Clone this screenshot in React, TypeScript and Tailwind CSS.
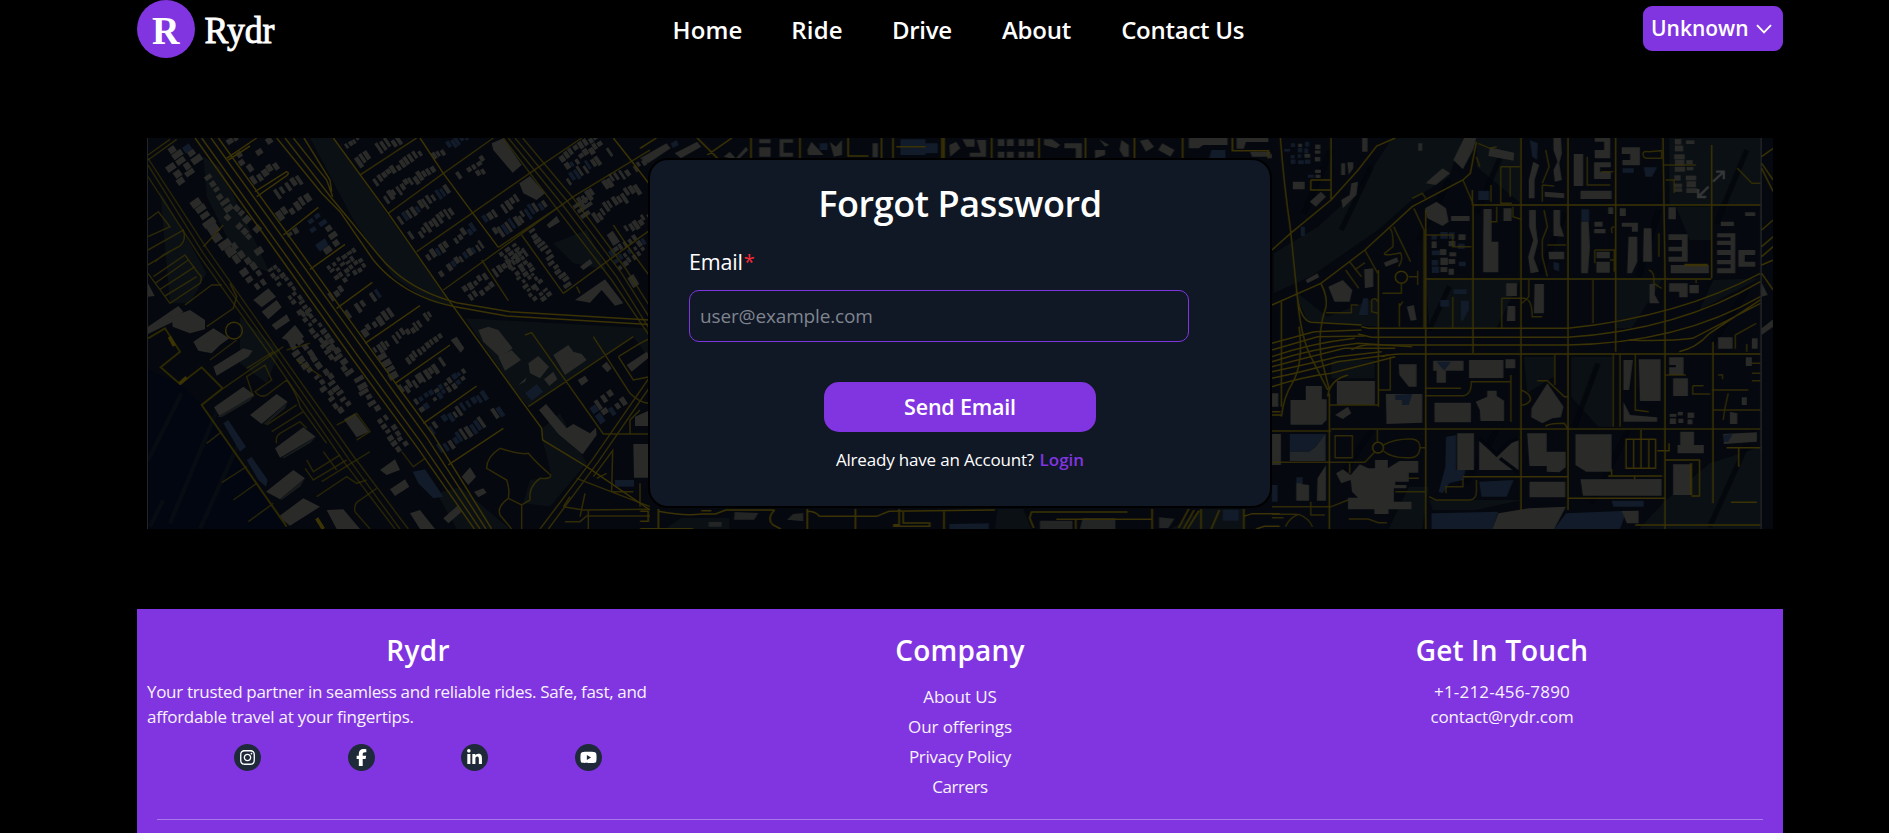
import { FaFacebookF, FaInstagram, FaLinkedinIn, FaYoutube } from 'react-icons/fa6';

const STONE = '#2a2b29';
const SLATE = '#121b29';
const DARK = '#03060c';
const OPEN = '#0a1013';
const ROAD = '#3b3305';

function seeded(seed: number) {
  let s = seed;
  return () => {
    s = (s * 16807) % 2147483647;
    return s / 2147483647;
  };
}

type BlockProps = {
  x: number;
  y: number;
  w: number;
  h: number;
  angle?: number;
  rows?: number;
  size?: number;
  blue?: number;
};

/* A city block: rows of small houses, centred on (x, y) and turned by angle. */
function Block({ x, y, w, h, angle = -34, rows = 2, size = 17, blue = 0 }: BlockProps) {
  const rnd = seeded(Math.round(x * 31 + y * 17 + w));
  const cells = [];
  const cols = Math.max(1, Math.round(w / size));
  for (let r = 0; r < rows; r++) {
    for (let c = 0; c < cols; c++) {
      if (rnd() < 0.08) continue;
      const bw = size * (0.55 + rnd() * 0.4);
      const bh = (h / rows) * (0.45 + rnd() * 0.4);
      const bx = -w / 2 + c * size + rnd() * 3;
      const by = -h / 2 + (r * h) / rows + rnd() * (h / rows - bh);
      cells.push(
        <rect
          key={`${r}-${c}`}
          x={bx.toFixed(1)}
          y={by.toFixed(1)}
          width={bw.toFixed(1)}
          height={bh.toFixed(1)}
          fill={rnd() < blue ? SLATE : STONE}
        />,
      );
    }
  }
  return <g transform={`translate(${x} ${y}) rotate(${angle})`}>{cells}</g>;
}

const westBlocks: BlockProps[] = [
  { x: 145, y: 85, w: 120, h: 80, angle: 55, rows: 2, size: 22, blue: 0.1 },
  { x: 98, y: 130, w: 110, h: 46, angle: 55, rows: 1, size: 26 },
  { x: 182, y: 238, w: 120, h: 50, angle: 55, rows: 1, size: 24 },
  { x: 235, y: 190, w: 130, h: 36, angle: 55, rows: 1, size: 22 },
  { x: 305, y: 275, w: 100, h: 60, angle: 45, rows: 2, size: 22 },
  { x: 245, y: 335, w: 120, h: 46, angle: 55, rows: 1, size: 30 },
  { x: 300, y: 385, w: 100, h: 60, angle: 55, rows: 2, size: 30 },
  { x: 345, y: 445, w: 90, h: 60, angle: 55, rows: 2, size: 28 },
  { x: 360, y: 360, w: 40, h: 42, rows: 1, size: 40 },
  { x: 450, y: 485, w: 190, h: 44, angle: 55, rows: 2, size: 17 },
  { x: 540, y: 610, w: 170, h: 48, angle: 55, rows: 2, size: 19 },
  { x: 595, y: 680, w: 130, h: 36, angle: 55, rows: 1, size: 19 },
  { x: 680, y: 795, w: 120, h: 38, angle: 60, rows: 1, size: 20 },
  { x: 495, y: 680, w: 110, h: 60, angle: 55, rows: 2, size: 22 },
  { x: 575, y: 780, w: 130, h: 60, angle: 55, rows: 2, size: 20 },
  { x: 755, y: 905, w: 110, h: 48, angle: 55, rows: 2, size: 20 },
  { x: 265, y: 38, w: 60, h: 24, rows: 1, size: 24 },
  { x: 370, y: 52, w: 60, h: 34, rows: 1, size: 22 },
  { x: 312, y: 100, w: 80, h: 30, angle: 55, rows: 1, size: 25 },
  { x: 378, y: 128, w: 105, h: 36, rows: 1, size: 20 },
  { x: 445, y: 172, w: 90, h: 40, rows: 1, size: 19, blue: 0.3 },
  { x: 462, y: 230, w: 120, h: 38, rows: 1, size: 20 },
  { x: 460, y: 308, w: 46, h: 24, rows: 1, size: 22 },
  { x: 548, y: 305, w: 110, h: 66, angle: 55, rows: 2, size: 24, blue: 0.4 },
  { x: 622, y: 408, w: 110, h: 76, rows: 4, size: 18 },
  { x: 590, y: 487, w: 56, h: 34, rows: 1, size: 18 },
  { x: 672, y: 520, w: 130, h: 42, rows: 1, size: 18, blue: 0.3 },
  { x: 712, y: 575, w: 120, h: 40, rows: 1, size: 20 },
  { x: 790, y: 610, w: 210, h: 36, rows: 1, size: 14 },
  { x: 855, y: 655, w: 140, h: 30, rows: 1, size: 15 },
  { x: 742, y: 705, w: 80, h: 34, angle: 60, rows: 1, size: 22 },
  { x: 850, y: 738, w: 170, h: 40, rows: 1, size: 15 },
  { x: 905, y: 780, w: 180, h: 48, rows: 2, size: 17, blue: 0.5 },
  { x: 955, y: 845, w: 210, h: 40, rows: 1, size: 17, blue: 0.75 },
  { x: 990, y: 900, w: 220, h: 46, rows: 1, size: 16, blue: 0.6 },
  { x: 640, y: 36, w: 60, h: 20, rows: 1, size: 14 },
  { x: 715, y: 62, w: 150, h: 48, rows: 1, size: 15, blue: 0.1 },
  { x: 770, y: 110, w: 170, h: 34, rows: 1, size: 16 },
  { x: 808, y: 160, w: 180, h: 38, rows: 1, size: 15 },
  { x: 850, y: 225, w: 175, h: 42, rows: 1, size: 15, blue: 0.35 },
  { x: 885, y: 275, w: 180, h: 42, rows: 1, size: 14 },
  { x: 930, y: 338, w: 170, h: 36, rows: 1, size: 16, blue: 0.5 },
  { x: 970, y: 380, w: 180, h: 34, rows: 1, size: 15, blue: 0.6 },
  { x: 930, y: 45, w: 130, h: 36, rows: 1, size: 14, blue: 0.4 },
  { x: 1000, y: 125, w: 100, h: 56, rows: 2, size: 17, blue: 0.3 },
  { x: 1090, y: 235, w: 140, h: 40, rows: 1, size: 16, blue: 0.7 },
  { x: 1140, y: 265, w: 180, h: 44, rows: 1, size: 14, blue: 0.4 },
  { x: 1015, y: 470, w: 90, h: 60, rows: 2, size: 18 },
  { x: 1110, y: 395, w: 120, h: 36, rows: 1, size: 15 },
  { x: 1155, y: 430, w: 190, h: 66, angle: 55, rows: 3, size: 15 },
  { x: 1230, y: 385, w: 210, h: 34, angle: 55, rows: 1, size: 16 },
  { x: 1320, y: 65, w: 130, h: 60, rows: 2, size: 17, blue: 0.1 },
  { x: 1350, y: 105, w: 170, h: 40, rows: 1, size: 15, blue: 0.4 },
  { x: 1390, y: 170, w: 180, h: 44, rows: 1, size: 15 },
  { x: 1425, y: 220, w: 160, h: 46, rows: 1, size: 15 },
  { x: 1335, y: 230, w: 60, h: 54, rows: 3, size: 56 },
  { x: 1495, y: 280, w: 90, h: 36, rows: 1, size: 15 },
  { x: 1470, y: 360, w: 120, h: 70, rows: 3, size: 17, blue: 0.3 },
  { x: 1505, y: 100, w: 60, h: 30, rows: 1, size: 15 },
  { x: 1410, y: 820, w: 120, h: 76, rows: 2, size: 22, blue: 0.3 },
];

function WestMap() {
  return (
    <g transform="translate(-7 -8) scale(0.33333)">
      <g fill={OPEN}>
        <path d="M510 24H580L940 530L870 515L760 440L640 270Z" />
        <path d="M975 565L1530 595V690L1480 620L1165 830L1130 790Z" />
        <path d="M190 80L240 110L330 300L390 430L290 380L200 200Z" />
        <path d="M1240 340L1340 300L1400 420L1300 400Z" />
        <path d="M1200 900L1260 850L1340 1000L1230 1130L1150 1120L1170 1050L1235 1040Z" />
        <path d="M890 1090L960 1070L1110 1197H950Z" />
        <path d="M60 180L200 430L150 520L90 520Z" />
        <path d="M300 560L420 660L380 760L300 700Z" />
      </g>
      <path d="M24 720L120 762L185 825L440 1197H24Z" fill="#020611" />
      <g stroke="#070c12" strokeWidth="13">
        <path d="M125 790L24 990M240 820L90 1180M300 930L180 1197M70 1110L30 1190" />
      </g>
      {westBlocks.map((b) => (
        <Block key={`${b.x}-${b.y}`} {...b} />
      ))}
      <g fill={STONE}>
        <path d="M24 590L115 528L130 545L100 575L24 612Z" />
        <path d="M95 560L150 540L195 570V598L150 610L98 590Z" />
        <path d="M160 635L220 595L268 625L240 645L215 670L175 662Z" />
        <path d="M220 710L310 655L338 662L325 680L230 737Z" />
        <path d="M222 832L310 770L343 795L240 860Z" />
        <path d="M330 855L410 792L443 815L365 882Z" />
        <path d="M405 955L490 892L527 920L420 983Z" />
        <path d="M378 1085L460 1020L495 1045L420 1108Z" />
        <path d="M415 1160L490 1105L540 1130L450 1187Z" />
        <path d="M24 460L44 498L24 500Z" />
        <path d="M340 510L385 475L408 500L365 532Z" />
        <path d="M365 545L410 510L425 532L385 568Z" />
        <path d="M395 585L440 553L450 572L408 600Z" />
        <path d="M425 625L465 585L492 620L455 655L440 630Z" />
        <path d="M612 868L645 850L687 905L650 922Z" />
        <path d="M720 1020L765 988L780 1020L740 1035Z" />
        <path d="M750 1078L795 1048L808 1070L765 1098Z" />
        <path d="M560 1140L610 1138L660 1197H590Z" />
        <path d="M810 1150L840 1140L885 1197H840Z" />
        <path d="M910 1165L955 1125L965 1145L925 1180Z" />
        <path d="M965 1040L990 1012L1008 1040L985 1065Z" />
        <path d="M1002 1085L1030 1075L1040 1088L1015 1102Z" />
        <path d="M1055 40L1090 25L1145 105L1118 128L1060 60Z" />
        <path d="M1138 160L1170 138L1215 190L1190 210L1150 190Z" />
        <path d="M1305 510L1395 448L1450 520L1425 527L1385 480L1350 518Z" />
        <path d="M1220 285L1250 258L1260 275L1228 295Z" />
        <path d="M1320 410L1350 387L1358 400L1330 420Z" />
        <path d="M1400 315L1418 302L1440 335L1420 348Z" />
        <path d="M1462 445L1480 432L1498 462L1480 475Z" />
        <path d="M1015 600L1045 590L1075 600L1118 655L1080 682L1030 635Z" />
        <path d="M1075 680L1115 660L1143 690L1095 722Z" />
        <path d="M1165 700L1195 678L1227 710L1200 745L1170 730Z" />
        <path d="M1240 675L1285 645L1300 665L1325 672L1340 690L1275 735Z" />
        <path d="M1212 748L1240 725L1252 748L1228 768Z" />
        <path d="M1197 840L1218 822L1280 895L1300 882L1350 910L1368 893L1370 915L1328 973L1255 912Z" />
        <path d="M1385 708L1400 695L1415 715L1402 727Z" />
        <path d="M1313 750L1335 737L1345 752L1325 767Z" />
        <path d="M1460 705L1520 665L1530 680L1475 725Z" />
        <path d="M1485 860L1530 840V888H1485Z" />
        <path d="M1480 942H1530V1043H1482Z" />
        <path d="M932 630L950 620L973 655L962 668Z" />
        <path d="M1135 765L1160 742L1155 755Z" />
      </g>
      <g fill={SLATE}>
        <path d="M250 880L265 870L318 950L300 965Z" />
        <path d="M320 990L335 980L383 1050L378 1070L355 1050Z" />
        <path d="M818 1025L855 1018L910 1100L880 1105L835 1060Z" />
        <path d="M1155 790L1190 762L1210 785L1175 812Z" />
        <path d="M1425 1050H1482V1070H1425Z" />
        <path d="M1525 375H1530V400H1525Z" />
        <path d="M525 345L555 325L565 345L540 365Z" />
      </g>
      <g fill="#181b1c">
        <path d="M232 860L343 795L330 812L245 862Z" />
        <path d="M370 882L443 815L435 835L378 884Z" />
        <path d="M425 983L527 920L512 938L432 985Z" />
        <path d="M420 1108L495 1045L480 1070L425 1110Z" />
      </g>
      <g fill="none" stroke={ROAD} strokeWidth="4.5">
        <path d="M165 24L640 690L830 950L1003 1197M185 24L655 680L845 940L1020 1197M213 24L675 665L862 925L1038 1197M235 24L690 655L880 915L1055 1197" />
        <path d="M24 85L200 355L400 640L640 978L805 1197M24 105L190 370L390 650L625 985L780 1197M24 140L180 380L380 660L615 1000L765 1197" opacity=".65" />
        <path d="M410 24L545 190L600 245L700 390Q790 500 945 530L1100 558L1530 584" />
        <path d="M435 24L575 205L625 265L715 375Q800 480 950 518L1110 545L1530 570" />
        <path d="M460 24L560 150L578 200M492 24L570 150L575 185" />
        <path d="M580 24L745 250L940 530L1150 820L1205 895L1208 930L1340 1010L1530 1140" />
        <path d="M840 24L910 130L995 245L1075 352" />
        <path d="M1105 24L1268 225L1430 440L1530 600M1125 24L1283 215L1445 430L1530 565M1148 24L1300 205L1460 420L1530 530M1090 24L1250 235L1415 450L1530 620" opacity=".75" />
        <path d="M1420 24L1480 100L1530 165" />
        <path d="M660 135L830 24M745 250L910 130L1060 24M830 365L1190 115L1325 24M910 480L1300 200L1530 60M1075 352L1250 235M1270 490L1530 300M1025 390L1105 512M1145 315L1270 490M1310 470L1320 490M1420 285L1460 345L1530 440" opacity=".8" />
        <path d="M260 85L350 24M345 185L440 125Q450 128 440 137L350 200M430 315L535 232M510 418L615 343M590 535L697 457M675 640L840 527M765 760L930 645M850 880L1010 768M925 1005L1090 895M265 90L330 48" />
        <path d="M24 75L90 28M24 90L110 28M24 320L90 290L55 245L24 268M24 360L130 300Q140 330 120 348L70 375L45 395M24 405L90 365M24 430L90 520L180 460Q190 440 175 430L135 375L40 440M45 460L145 390M60 478L165 410M75 498L170 440M135 525L215 465L245 465M200 590L280 535L290 500L270 460M190 350L250 285" opacity=".75" />
        <circle cx="282" cy="602" r="25" />
        <path d="M210 690L290 630M320 715L400 665M340 800L320 740L375 705L395 750L345 785Q360 805 380 795L440 750M380 885L470 825M395 905L490 845M410 940Q405 920 420 910L480 875L500 895M250 775L430 650M500 990L520 1025L600 975M495 1015L520 1050L620 990M545 1055L690 965M550 965L590 1020M245 1058L320 1010M200 940L245 905M325 1175L400 1120M530 1100L620 1040L650 1060L680 1050M645 1145Q640 1120 660 1110L710 1075M645 1145L690 1197M590 885L620 870L650 850L690 905L650 930M785 965L820 1010L855 985M280 1110L350 1060M440 660L510 640M470 690L545 740M440 750Q470 790 480 830L560 940" opacity=".65" />
        <path d="M24 625L75 595L120 665L62 712L120 762L185 712L248 775L185 825L440 1190" strokeWidth="6" stroke="#2c2803" />
        <path d="M88 620L103 648M118 762L140 742M530 1165L550 1197" strokeWidth="11" stroke="#3c3403" />
        <path d="M1080 955Q1040 980 1040 1015L1100 1050Q1110 1080 1105 1105Q1070 1130 1080 1155L1115 1197M1080 955Q1140 975 1165 970Q1190 1000 1232 1035Q1235 1048 1200 1045Q1165 1070 1170 1110L1145 1125L1105 1105M1145 1125V1197" opacity=".8" />
        <path d="M1155 615L1175 608L1390 912H1530M1165 830L1480 620M1360 620L1470 790Q1500 820 1530 820M1435 680L1500 640L1530 625M1435 680L1480 750L1530 740M1200 1197L1360 985L1530 740M1225 1197L1375 995L1530 770M1470 912V870L1500 840M1360 1040L1418 962L1415 1085M1370 1045L1400 1030M1310 1045L1530 1130M1270 1130L1330 1140L1530 1138M1275 1175H1320L1340 1158H1530M1345 1197V1140M1320 1160L1335 1090M1270 1130L1290 1100M1415 1085H1480M1500 1060V1130" opacity=".85" />
      </g>
      <path d="M22 24V1197" stroke="#2a2c2e" strokeWidth="3" />
    </g>
  );
}

const eastBlocks: BlockProps[] = [
  { x: 110, y: 70, w: 80, h: 70, angle: 0, rows: 4, size: 20, blue: 0.9 },
  { x: 175, y: 60, w: 28, h: 70, angle: 0, rows: 4, size: 28 },
  { x: 165, y: 130, w: 50, h: 30, angle: 0, rows: 2, size: 22, blue: 0.4 },
  { x: 545, y: 370, w: 80, h: 130, angle: 0, rows: 5, size: 26, blue: 0.5 },
  { x: 600, y: 365, w: 30, h: 110, angle: 0, rows: 4, size: 25, blue: 0.8 },
  { x: 1260, y: 110, w: 70, h: 170, angle: 0, rows: 8, size: 34 },
  { x: 1008, y: 295, w: 40, h: 40, angle: 0, rows: 2, size: 38 },
  { x: 1255, y: 865, w: 90, h: 40, angle: 0, rows: 2, size: 26 },
];

const eastBuildings = [
  'M603 24H640L630 60L600 118L572 90Z', 'M500 150L540 115L562 130L520 165L490 160Z', 'M680 52L752 68L750 92L675 78Z',
  'M147 215L180 185L195 200L165 230Z', 'M97 155H132V178H97Z', 'M240 100H252V135H240ZM258 97H276V115L262 135Z',
  'M270 160L290 155L285 195L245 235L240 210L265 195Z', 'M302 24H318V65H302ZM468 40H480V62H468Z',
  'M488 235L522 215L550 235L558 275L540 288L495 265Z', 'M565 258H620V273H565Z', 'M661 237H685V335H705V427H660V335Z',
  'M720 235H744V273H720Z', 'M928 72H956V168H928Z', 'M990 24H1036V85H990V60H1018V35H990Z', 'M988 97H1038V112H1006V125H1038V147H988Z',
  'M1070 52H1124V106H1072V90H1095V72H1070Z', 'M948 182H1040V207H948Z', 'M842 185L900 190V205L842 200Z',
  'M868 24H890L893 70L885 100L893 150L872 155L868 120L880 95L868 60Z', 'M808 95L826 105L812 150V205H795V150Z',
  'M868 240H888V285L900 320L868 318Z', 'M796 240H816V290L822 335L810 385L825 425L800 430L793 380L808 330L796 290Z',
  'M853 365H900V388H855Z', 'M950 275H972L976 350L970 430H950V350Z', 'M1070 278H1118V305H1100V290H1070Z',
  'M1090 320H1116V395L1100 430H1086Z', 'M1135 295H1158L1160 395H1133Z', 'M1208 232H1230V268H1208Z',
  'M1208 313H1265V395H1208V380H1248V364H1208V350H1248V330H1208Z', 'M1215 405H1328V430H1215Z',
  'M1352 310H1406V430H1352V415H1392V403H1352V390H1392V375H1352V360H1392V345H1352V332H1392V322H1352Z',
  'M1415 360H1465V375H1434V395H1465V410H1415Z', 'M1363 275H1402V288H1363ZM1435 247H1465V258H1435Z',
  'M995 365H1035V385H995ZM995 395H1035V428H995Z', 'M1030 232H1045V252H1030ZM1064 235H1082V258H1064Z',
  'M202 470L245 450L273 480L265 515L220 515Z', 'M308 418L335 415V470L310 475Z', 'M135 450L170 430L175 442L140 460Z',
  'M366 398L405 382L410 395L372 410Z', 'M728 460H760V498H728ZM732 528H755V573H730Z', 'M812 462H840V550H810Z',
  'M1210 460H1265V502H1240V485H1210ZM1270 465H1298V490H1270Z', 'M1152 462H1168V495L1182 520H1152Z',
  'M1355 622H1398V656H1355ZM1455 625H1472V656H1455Z', 'M434 530L455 525L463 570L445 572Z',
  'M410 703H463V770H440L412 735Z', 'M512 692H602V722H550V758H522V722H512Z', 'M618 690H720V744H618Z',
  'M726 688H755V715H726Z', 'M227 753H340V824H227Z', 'M90 810H135V768H183V808H197V870L183 884H90Z',
  'M372 792H480V878L374 882Z', 'M516 818H624V877H516Z', 'M638 815L672 800V782H700V798L722 812V873H652L650 840Z',
  'M803 835L850 760L898 830L890 862L865 865L835 880L802 862Z', 'M1120 688H1185V813H1124Z', 'M1075 690H1103L1092 780H1075Z',
  'M1075 815L1095 855L1175 862V875H1075Z', 'M1210 682H1253V735H1210V712H1230V705H1210Z', 'M1222 745H1266V798H1222Z',
  'M1437 682H1455V708H1437ZM1425 802H1440V825H1425Z', 'M1390 845L1412 850V882H1390Z',
  'M583 910H633V1020H583Z', 'M648 932L700 978L765 920V1020H648Z', 'M790 910H848V965H904V1012L885 1027L848 1025V1008H797Z',
  'M933 913H1040V1025H965L933 1005Z', 'M1243 905H1284V945H1313V970H1235V945H1243Z', 'M1370 912L1470 907V935L1372 942Z',
  'M1222 1003H1276V1095H1222Z', 'M797 1055H903V1102H797Z', 'M948 1048L1188 1047V1097H955Z',
  'M225 1030L245 1018L268 1035L295 1003L320 1015H340V990H378V1015L412 993H468V1028H440V1055H400V1065H433V1075H396V1115H448V1138H380V1152H338V1138H260V1103H290L272 1085L268 1050L240 1060Z',
  'M107 1060L125 1040V1063L145 1065V1112H107Z', 'M170 1045L195 1005V1112H168Z', 'M35 912H62V1005H35ZM35 790H54V830H35Z',
  'M705 1150L795 1135L905 1130L870 1197H687Z', 'M1070 1143L1120 1142V1180H1085Z', 'M222 855L260 830L270 850L245 867Z',
  'M1485 460L1502 495L1484 500Z', 'M1484 595L1518 568V590L1484 615Z', 'M35 70V85H20Z',
];

function EastMap() {
  return (
    <g transform="translate(1113 -8) scale(0.338 0.33333)">
      <g fill={OPEN}>
        <path d="M390 24H600L560 140L450 210L350 300L150 440L40 490V370L170 290L290 180Z" />
        <path d="M640 24H770V220L640 110ZM1210 24H1480V225H1210Z" />
        <path d="M490 450H770L700 595H500ZM1052 450H1190L1100 595H1052Z" />
        <path d="M920 680H1045V890H1000L920 800ZM210 690H340V745H210ZM100 480L200 560L350 500V590L140 575Z" />
        <path d="M1200 1110L1330 1000L1480 950V1197H1120ZM780 680H870V740L790 790Z" />
        <path d="M1230 230H1335V330H1270ZM1340 450L1480 445L1300 540ZM440 1070H500L480 1197H380Z" />
        <path d="M500 1110H780L640 1140H510Z" />
      </g>
      <g stroke={DARK} strokeWidth="15" opacity=".75">
        <path d="M210 60L130 250M330 110L240 300M560 150L470 330M720 60L640 250M900 250L830 430M1180 240L1120 440M1440 60L1350 280M560 470L500 600M700 900L610 1060M1090 900L980 1120M1440 480L1340 640M1000 700L930 890M330 900L240 1040M1460 900L1330 1190" />
      </g>
      {eastBlocks.map((b) => (
        <Block key={`${b.x}-${b.y}`} {...b} />
      ))}
      <g fill={SLATE}>
        <path d="M798 30L822 40L820 90L805 80ZM645 182H678V210H645ZM950 238H974V275H950ZM120 290H133V318H120Z" />
        <path d="M550 920L580 915V1020H608L600 1050L560 1060L540 1090L528 1085L548 1010Z" />
        <path d="M648 1055L750 1050L730 1100H655ZM507 1150L705 1145L687 1197H507ZM905 1150L1085 1142L1065 1197H870Z" />
        <path d="M1040 1112H1135V1130H1045ZM35 1065H52V1115H35ZM533 510H560V530H533ZM1072 115H1106V128H1072ZM1135 112H1175L1160 140H1140Z" />
        <path d="M868 395L885 400V425L868 418ZM572 478H612V492H572Z" />
      </g>
      <path d={eastBuildings.join('')} fill={STONE} />
      <g fill={SLATE}>
        <path d="M88 912H192L165 950L145 965H88ZM400 795L450 792L440 825H420V810H400ZM522 695H565L545 722ZM292 555L305 505H320V555ZM594 512L618 512V540L600 572H594Z" />
        <path d="M107 1042H125V1060H107ZM1372 915L1398 912L1385 935H1372Z" />
      </g>
      <path d="M88 965H145L165 950L192 912H194V993H88Z" fill="#25282a" />
      <path d="M648 925L700 975L740 935L765 925M710 985L765 1027" stroke={DARK} strokeWidth="10" fill="none" />
      <g fill="none" stroke={ROAD} strokeWidth="4.5">
        <path d="M35 525L180 460L310 360L450 230L600 150L622 130L640 35M60 24Q70 160 90 300L110 500Q120 570 150 577L300 585M110 500Q120 620 150 680L200 780M35 360L90 310L210 210L290 120L345 48L400 24M210 24V210M150 150H208M150 150V180H208" />
        <path d="M772 24V1140M911 24V1140M1052 24V665M1192 24L1198 440V1197M1336 45V445M1340 635V1120M630 225V670M490 240V1197M350 420V830M205 790V1197M63 515V830M628 180V225" />
        <path d="M630 225H1480M490 447H1335" />
        <path d="M300 590L320 595H910Q1240 560 1480 430M290 612L330 622H910Q1240 600 1480 455M270 660Q300 640 350 645H910Q1240 640 1480 500M360 680Q390 670 430 672H1480M1090 630Q1200 635 1280 625L1480 520M1240 665Q1290 655 1330 610L1480 510" />
        <path d="M35 640L160 605L300 600M35 660L170 620L310 618M35 680Q150 640 280 625M35 695Q160 655 290 640L450 650M35 710Q150 680 250 655L400 655M35 725Q150 700 230 680L360 665M35 745Q150 720 230 695L380 675M35 770Q130 740 210 730L400 680M200 800Q205 750 260 735" />
        <path d="M115 590Q130 700 95 760Q70 800 63 860M180 460Q200 500 195 530Q170 600 180 680L205 780M35 855H63M35 845H60" />
        <path d="M210 897H1480M35 903H210M205 825H350M490 775H595M490 797H600Q625 795 625 755H742M742 735V875M772 780Q800 790 800 810Q790 825 775 825M872 675V765M820 752H850L900 800H911M845 890Q850 880 900 880L911 897M1065 670V890M1110 670V840L1150 845M385 680V780H350M1045 670V890" opacity=".85" />
        <path d="M1280 767H1312M1280 767V792H1332M1355 735H1368V748M1336 780H1445M1340 840H1480M1385 790Q1375 830 1370 870M1200 735H1260M1455 700H1480M1455 730H1480M1455 752H1480M1406 656V615L1468 580M1440 642V665" opacity=".8" />
        <path d="M1083 928H1170V1015H1083ZM1105 928V1015M1127 900V1015M1150 928V1015M1175 962H1210V940M1200 990H1300V1098H1276M1380 953H1480M1416 953V1010M1393 1117H1470M1030 1038H1190M1040 1018V1035M911 1105H1200M1110 1185H1480M600 1040H911M1108 1038V1048" />
        <circle cx="349" cy="953" r="16" />
        <path d="M365 945Q400 925 450 927Q475 930 473 955Q470 985 440 983Q390 985 365 963M474 953H490M222 917H273V983H222ZM347 900V935M340 965L310 997H205M205 997H35M265 1000V1030M35 1153H110M35 1163H70M35 1130H205M150 1115V1155H192M75 1190Q90 1160 115 1153Q145 1165 155 1190M262 1167H320L350 1178H375M205 1132L260 1110M400 1085H490M440 1045H470M640 1050V1085Q640 1108 620 1110H520L500 1100M550 1090V1070H600V1045" opacity=".8" />
        <circle cx="418" cy="442" r="18" />
        <path d="M440 440H466M466 422V465M418 462V490H362M385 295Q395 310 393 350L368 370Q365 380 415 368Q425 385 410 410M455 235L485 300V595M310 360L348 430M253 420L292 475M265 395L300 440M280 420L310 398M395 290L445 395M330 510Q340 500 348 515M330 510V545L348 550M412 520V590M412 530L422 515M195 548H270V525H290M450 205L480 190L490 205M600 150L630 220" opacity=".8" />
        <path d="M645 40L680 55L700 50M640 80L650 110M712 110V220H745M712 110H770M740 110V200M683 165V215M700 230V275H680M748 230V260L772 268M835 165V215M835 165L870 168M845 60L855 110L835 160M840 240L850 290L835 330V380L850 440M850 345H905M968 80V165H1036M1010 125H1045M985 450V580M990 360H1048V425M990 360V400M1035 390H1048M1048 290Q1035 290 1042 310M1150 420Q1168 425 1165 460L1188 475M1133 72Q1133 62 1150 65L1188 62V85H1145Q1133 85 1133 72M1195 105H1290M1200 150H1225V190M1412 115L1455 160H1480M1290 450V460M1180 310V380M715 505V595M715 505H775Q805 500 805 560H835M795 450V500L775 520M570 500V595M490 315H570V350H625" opacity=".8" />
        <path d="M1255 405H1325M1275 1000V1095" strokeWidth="7" />
        <path d="M1484 80L1518 55M1484 100L1518 150M1484 115L1518 185M1484 300L1518 270M1484 350L1518 320M1484 380L1518 350M1484 405L1518 390M1484 430L1518 480" />
      </g>
      <path d="M1482 24V1197" stroke="#353738" strokeWidth="3" />
      <g fill="none" stroke="#353637" strokeWidth="7">
        <path d="M1340 155L1371 126M1349 125H1372V148" />
        <path d="M1327 170L1297 200M1296 177V201H1320" />
      </g>
    </g>
  );
}

function CentreMap() {
  return (
    <>
      <g transform="translate(493 -8) scale(0.408 0.33333)">
        <g fill={STONE}>
          <path d="M0 85L65 40L75 55L20 100ZM85 70L140 35L150 50L100 85ZM205 80L220 65L235 85L260 50L265 60L240 90ZM292 28H320V40H292ZM292 52H320V80H292ZM342 28H375V38H352V68H375V80H342ZM410 60L420 35L435 55L450 75H412ZM465 35L480 50L495 30V75L475 80ZM570 40H583V82H570Z" />
          <path d="M758 45L775 35L785 55L760 80ZM790 28H820V50H800ZM825 30H848V80H808V68H835ZM877 28H893V48H877ZM899 28H916V48H899ZM928 28H943V48H928ZM948 28H965V48H948ZM877 65H893V83H877ZM899 65H916V83H899ZM928 65H943V83H928ZM948 65H965V83H948ZM990 28H1010L1030 45L1020 55L990 45ZM1040 40H1083V85H1068V55H1040ZM1115 60H1140V75L1115 85ZM1125 28L1150 45L1140 50ZM1180 30L1198 45V80H1185L1175 60ZM1225 32L1245 28L1260 50L1240 65ZM1280 40L1310 60L1300 80L1270 60ZM1345 24H1440V45H1380L1370 55H1345ZM1462 24H1540V36H1485L1480 56H1462ZM1495 65H1545V80H1500Z" />
        </g>
        <path d="M75 40L90 30L95 45L80 55ZM638 28H700V75H638ZM690 40H730V70H690ZM1400 60H1435V84H1395ZM440 40H460V60H440Z" fill={SLATE} />
        <g fill="none" stroke={ROAD} strokeWidth="4.5">
          <path d="M0 55L40 24M140 24L190 85M165 75L225 24M272 24V85M392 24V85M510 24V78H560M592 24V85M620 24V85M628 50H700M740 24V85M745 24V85M862 24V85M978 24V85M1092 24V85M1212 24V85M1330 24V85M1452 24V62H1540V85" />
        </g>
      </g>
      <g transform="translate(493 360) scale(0.408 0.33333)">
        <path d="M875 33H940L960 93H870ZM100 60H220V93H60ZM1380 33H1480V93H1300Z" fill={OPEN} />
        <path d="M168 72H200V86H168ZM980 68H1060V93H980ZM1085 60H1165V93H1078ZM232 42L290 45L280 65H230ZM360 65L375 48L400 45V70ZM1272 58L1310 62L1295 90H1272Z" fill="#232525" />
        <path d="M758 78L855 76V93H758ZM1428 35H1468V68H1428Z" fill={SLATE} />
        <g fill="none" stroke={ROAD} strokeWidth="4.5">
          <path d="M45 33V93M0 40H20V70H0M45 40Q110 55 150 48H185L210 36H330M150 38H175M410 33V93M330 36Q310 60 325 80L345 93M410 40Q430 40 440 55H580L610 40L870 36M528 33V93M635 33V80H620M645 42V75H710V85H620M745 40V93M960 40L955 60L965 90M960 42H1195M1020 64H1255M1255 33V93M1068 65V93M1320 90L1345 33M1332 93L1358 36M1342 93L1370 38M1375 33V93M1400 93L1420 36M1480 33V93M1480 55L1500 47H1568M1510 93L1530 85H1568M0 92H130" />
        </g>
      </g>
    </>
  );
}

function CityMap() {
  return (
    <svg className="absolute inset-0 size-full" viewBox="0 0 1626 391" preserveAspectRatio="none" aria-hidden="true">
      <defs>
        <filter id="soft" x="0" y="0" width="100%" height="100%" colorInterpolationFilters="sRGB">
          <feGaussianBlur stdDeviation="0.45" />
        </filter>
      </defs>
      <rect width="1626" height="391" fill="#05080e" />
      <g filter="url(#soft)">
        <WestMap />
        <CentreMap />
        <EastMap />
      </g>
    </svg>
  );
}

function Logo() {
  return (
    <svg className="h-[58px] w-[140px] self-start" viewBox="0 0 140 58">
      <circle cx="29" cy="29" r="29" fill="#8135e0" />
      <g fill="#fff" stroke="#fff" fontFamily="'Liberation Serif', serif">
        <text x="15" y="44" fontSize="41" fontWeight="700" strokeWidth="0" textLength="27.5" lengthAdjust="spacingAndGlyphs">
          R
        </text>
        <text x="67.5" y="42.5" fontSize="37" strokeWidth="0.9" textLength="70" lengthAdjust="spacingAndGlyphs">
          Rydr
        </text>
      </g>
    </svg>
  );
}

function Header() {
  return (
    <header className="flex h-[60px] shrink-0 items-center">
      <Logo />
      <nav className="ml-[395.5px] flex gap-12 text-2xl leading-none font-semibold whitespace-nowrap">
        <a className="tracking-[0.1px]">Home</a>
        <a className="ml-[1px] tracking-[0.2px]">Ride</a>
        <a className="ml-[1px] tracking-[-0.25px]">Drive</a>
        <a className="mx-[2px] tracking-[-0.2px]">About</a>
        <a className="tracking-[-0.26px]">Contact Us</a>
      </nav>
      <button className="mt-[-3px] ml-auto flex h-[45px] w-[140px] items-center rounded-[9px] bg-[#8135e0] pl-2 text-[21px] leading-none font-semibold">
        Unknown
        <svg className="ml-[7px] h-[10px] w-4" viewBox="0 0 16 10" fill="none" stroke="currentColor" strokeWidth="1.9">
          <path d="M1 1.2L8 8.3L15 1.2" />
        </svg>
      </button>
    </header>
  );
}

function ForgotPasswordCard() {
  return (
    <form className="relative mx-auto flex h-[350px] w-[624px] flex-col items-center rounded-[20px] border-2 border-black bg-[#101725] pt-5">
      <h1 className="h-12 text-4xl leading-[48px] font-semibold tracking-[-0.4px]">Forgot Password</h1>
      <label className="mt-[18px] ml-[39px] flex h-8 self-start text-[21.5px] leading-8 tracking-[-0.2px]">
        Email<span className="ml-[1px] text-[20px] text-[#fb2c36]">*</span>
      </label>
      <input
        className="mt-3 ml-[39px] h-[52px] w-[500px] self-start rounded-[10px] border border-[#8135e0] bg-transparent pl-[10px] text-[19px] tracking-[-0.15px] placeholder:text-[#7f858f]"
        placeholder="user@example.com"
      />
      <button
        type="button"
        className="mt-[39.5px] h-[50px] w-[272px] rounded-[15px] bg-[#8135e0] text-[21.5px] leading-none font-semibold tracking-[-0.2px]"
      >
        Send Email
      </button>
      <p className="mt-4 flex gap-[5.5px] text-[17px] leading-6">
        <span className="tracking-[-0.18px]">Already have an Account?</span>
        <a className="font-semibold text-[#8135e0]">Login</a>
      </p>
    </form>
  );
}

const socials = [FaInstagram, FaFacebookF, FaLinkedinIn, FaYoutube];

function Footer() {
  return (
    <footer className="mt-20 flex-1 bg-[#8135e0] px-[10px] pt-[21px] text-[17px]">
      <div className="grid h-[172px] grid-cols-3">
        <section className="whitespace-nowrap">
          <h2 className="text-center text-[28px] leading-10 font-semibold tracking-[0.3px]">Rydr</h2>
          <p className="mt-[9px] leading-[25px] text-[#f7f2fd]">
            <span className="block tracking-[-0.32px]">
              Your trusted partner in seamless and reliable rides. Safe, fast, and
            </span>
            <span className="block tracking-[-0.24px]">affordable travel at your fingertips.</span>
          </p>
          <div className="mt-[14.5px] flex justify-evenly">
            {socials.map((Icon, i) => (
              <a key={i} className="flex size-[27px] items-center justify-center rounded-full bg-[#1e2939]">
                <Icon size={17} />
              </a>
            ))}
          </div>
        </section>
        <section className="text-center">
          <h2 className="text-[28px] leading-10 font-semibold tracking-[0.18px]">Company</h2>
          <ul className="mt-3 leading-[30px] text-[#f7f2fd]">
            <li className="tracking-[-0.06px]">About US</li>
            <li className="tracking-[-0.1px]">Our offerings</li>
            <li className="tracking-[-0.29px]">Privacy Policy</li>
            <li className="tracking-[-0.47px]">Carrers</li>
          </ul>
        </section>
        <section className="text-center">
          <h2 className="text-[28px] leading-10 font-semibold tracking-[0.14px]">Get In Touch</h2>
          <p className="mt-[9px] leading-[25px] tracking-[0.2px] text-[#f7f2fd]">+1-212-456-7890</p>
          <p className="leading-[25px] tracking-[-0.12px] text-[#f7f2fd]">contact@rydr.com</p>
        </section>
      </div>
      <hr className="mx-[10px] mt-[17px] border-t border-[#ab78eb]" />
    </footer>
  );
}

export default function App() {
  return (
    <div className="h-screen overflow-hidden bg-black font-['Open_Sans','Noto_Sans',sans-serif] text-white">
      <div className="ml-[137px] flex h-full w-[1646px] flex-col">
        <Header />
        <main className="relative mx-[10px] mt-[78px] h-[391px] shrink-0 overflow-hidden pt-5">
          <CityMap />
          <ForgotPasswordCard />
        </main>
        <Footer />
      </div>
    </div>
  );
}
